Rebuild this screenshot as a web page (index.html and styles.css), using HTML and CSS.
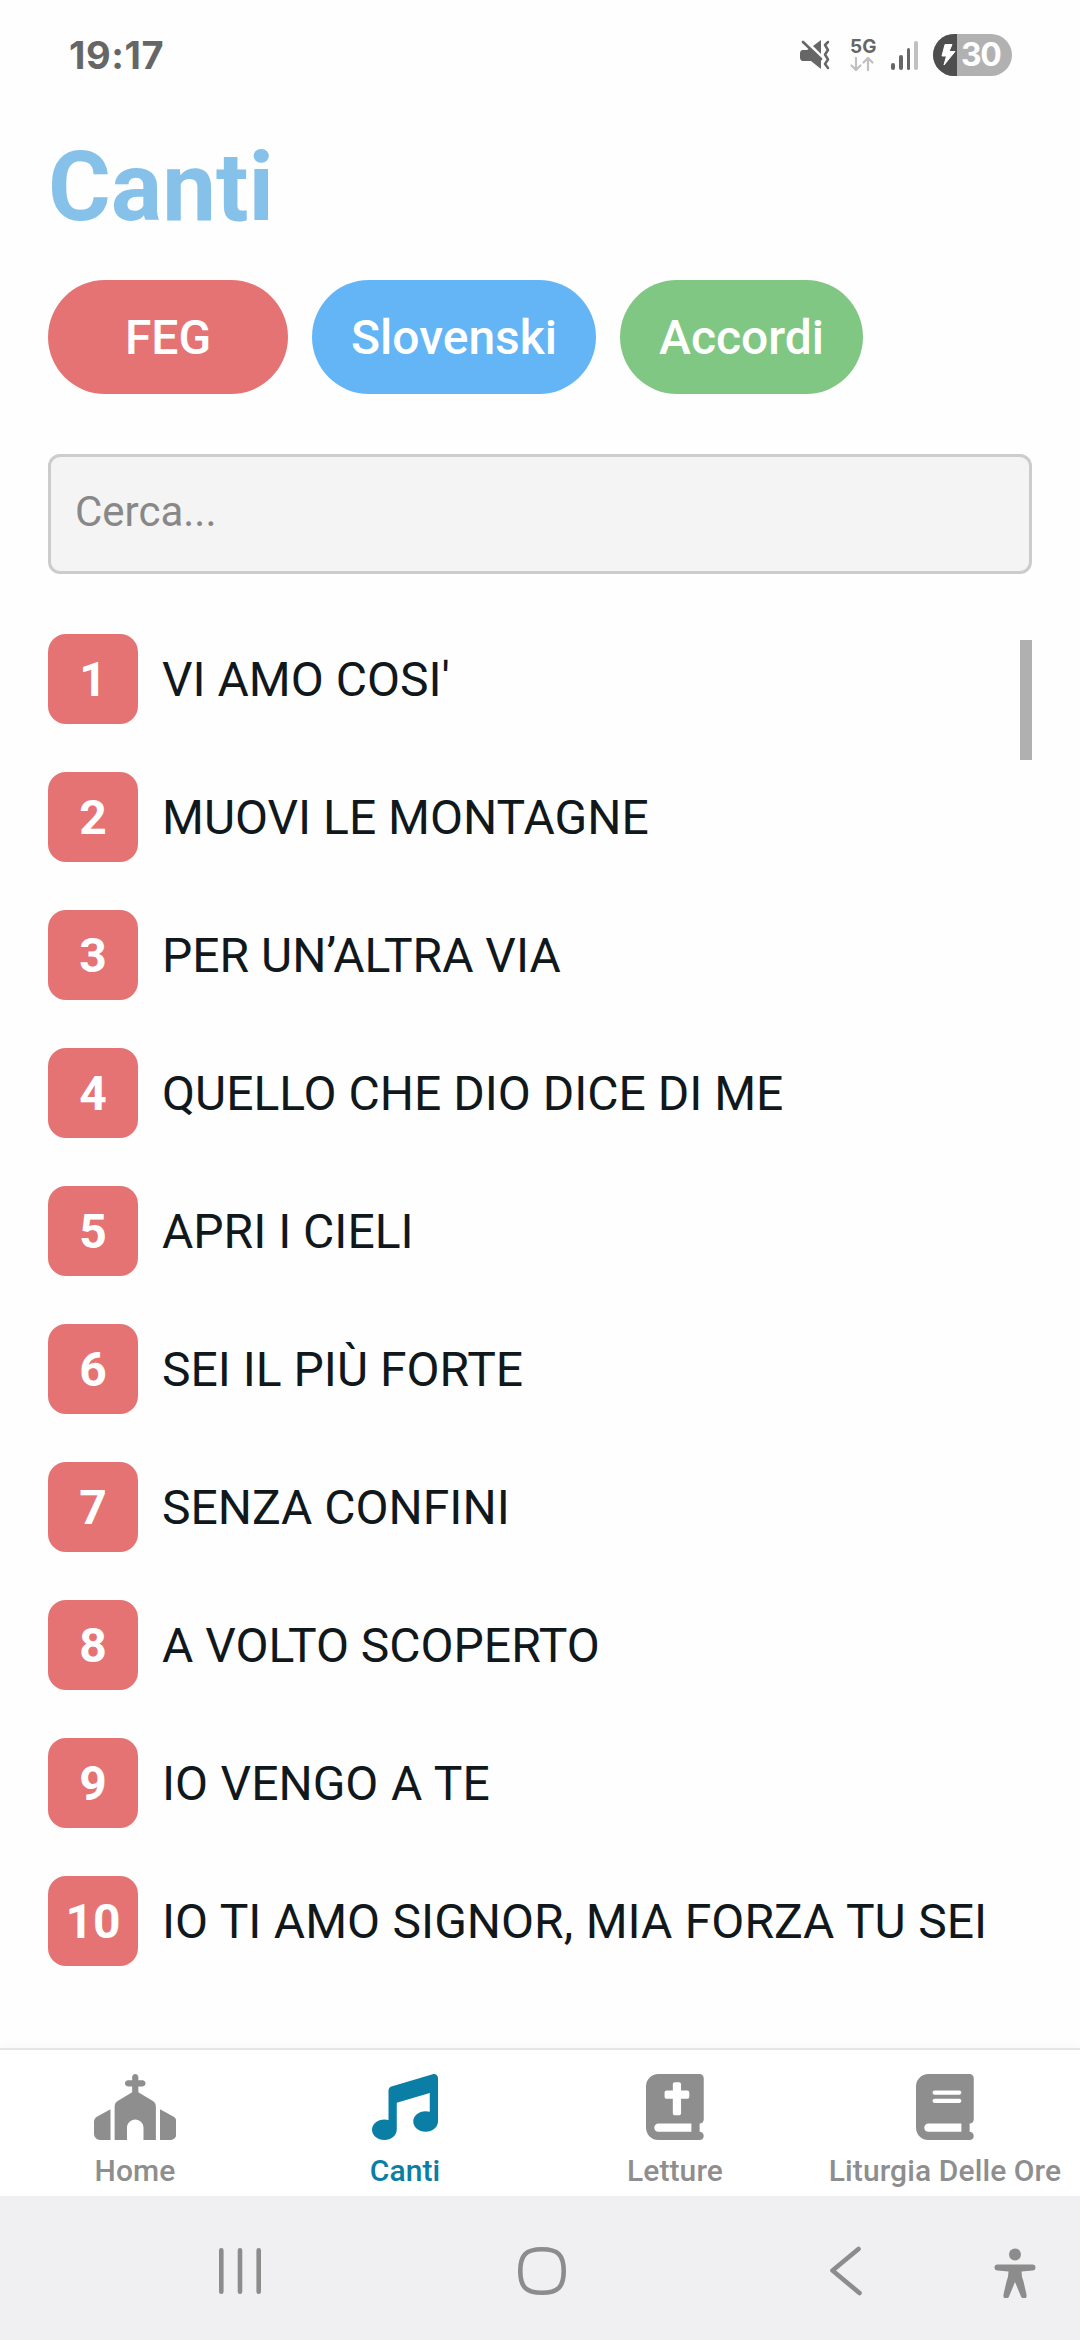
FILE: index.html
```html
<!DOCTYPE html>
<html lang="it">
  <head>
    <meta charset="UTF-8" />
    <meta name="viewport" content="width=device-width, initial-scale=1.0" />
    <title>Canti</title>

    <link rel="stylesheet" href="styles.css">
  </head>

  <body>
    <div class="status-bar">
      <span class="clock">19:17</span>
      <div class="status-icons">
        <svg class="mute" viewBox="0 0 30 30" width="30" height="30">
          <path d="M2 10h5l3-2 11 11v10l-10-8H2q-2-1-2-3v-5q0-2 2-3z" fill="#666" />
          <path d="M13 6l8-6v14z" fill="#666" />
          <path d="M3 2l18 17" stroke="#666" stroke-width="2.6" stroke-linecap="round" />
          <path d="M28 2l-3 3 3 5-3 4.500 3 5-3 4.500 3 4" fill="none" stroke="#666" stroke-width="2.500" stroke-linecap="round" stroke-linejoin="round" />
        </svg>
        <div class="network">
          <span>5G</span>
          <svg viewBox="0 0 24 14" width="24" height="14">
            <path d="M6 1v12M1.500 8.500L6 13l4.500-4.500M18 13V1M13.500 5.500L18 1l4.500 4.500" fill="none" stroke="#c0c0c0" stroke-width="2.200" stroke-linecap="round" stroke-linejoin="round" />
          </svg>
        </div>
        <div class="signal">
          <i class="s1"></i>
          <i class="s2"></i>
          <i class="s3"></i>
          <i class="s4"></i>
        </div>
        <div class="battery">
          <svg viewBox="0 0 24 42" width="24" height="42">
            <path d="M12 10.500h7l-3 7h6L11 31l2.500-9H9z" fill="#fff" stroke="#fff" stroke-linejoin="round" />
          </svg>
          <span>30</span>
        </div>
      </div>
    </div>

    <main>
      <h1>Canti</h1>

      <div class="filters">
        <button class="feg">FEG</button>
        <button class="slovenski">Slovenski</button>
        <button class="accordi">Accordi</button>
      </div>

      <input class="search" type="text" placeholder="Cerca..." />

      <div class="songs">
        <ul>
          <li><b>1</b><span>VI AMO COSI'</span></li>
          <li><b>2</b><span>MUOVI LE MONTAGNE</span></li>
          <li><b>3</b><span>PER UN’ALTRA VIA</span></li>
          <li><b>4</b><span>QUELLO CHE DIO DICE DI ME</span></li>
          <li><b>5</b><span>APRI I CIELI</span></li>
          <li><b>6</b><span>SEI IL PIÙ FORTE</span></li>
          <li><b>7</b><span>SENZA CONFINI</span></li>
          <li><b>8</b><span>A VOLTO SCOPERTO</span></li>
          <li><b>9</b><span>IO VENGO A TE</span></li>
          <li><b>10</b><span>IO TI AMO SIGNOR, MIA FORZA TU SEI</span></li>
        </ul>
        <div class="scroll-thumb"></div>
      </div>
    </main>

    <nav class="tabs">
      <a>
        <svg viewBox="0 0 640 512" height="66">
          <path d="M344 24c0-13.300-10.700-24-24-24s-24 10.700-24 24V48H264c-13.300 0-24 10.700-24 24s10.700 24 24 24h32v46.400L183.300 210c-14.500 8.700-23.300 24.300-23.300 41.200V512h96V416c0-35.300 28.700-64 64-64s64 28.700 64 64v96h96V251.200c0-16.900-8.800-32.500-23.300-41.200L344 142.400V96h32c13.300 0 24-10.700 24-24s-10.700-24-24-24H344V24zM24.900 330.300C9.500 338.800 0 354.900 0 372.400V464c0 26.500 21.500 48 48 48h80V273.600L24.900 330.300zM592 512c26.500 0 48-21.500 48-48V372.400c0-17.500-9.500-33.600-24.900-42.100L512 273.600V512h80z" />
        </svg>
        <span>Home</span>
      </a>
      <a class="active">
        <svg viewBox="0 0 512 512" height="66">
          <path d="M499.100 6.300c8.100 6 12.900 15.600 12.900 25.700v72V368c0 44.200-43 80-96 80s-96-35.800-96-80s43-80 96-80c11.200 0 22 1.600 32 4.600V147L192 223.800V432c0 44.200-43 80-96 80s-96-35.800-96-80s43-80 96-80c11.200 0 22 1.600 32 4.600V200 128c0-14.100 9.300-26.600 22.800-30.700l320-96c9.700-2.900 20.200-1.100 28.300 5z" />
        </svg>
        <span>Canti</span>
      </a>
      <a>
        <svg viewBox="0 0 448 512" height="66">
          <path fill-rule="evenodd" d="M96 0C43 0 0 43 0 96V416c0 53 43 96 96 96H384h32c17.700 0 32-14.300 32-32s-14.300-32-32-32V384c17.700 0 32-14.300 32-32V32c0-17.700-14.300-32-32-32H384 96zm0 384H352v64H96c-17.700 0-32-14.300-32-32s14.300-32 32-32zM208 80c0-8.800 7.200-16 16-16h32c8.800 0 16 7.200 16 16v48h48c8.800 0 16 7.200 16 16v32c0 8.800-7.200 16-16 16H272V304c0 8.800-7.200 16-16 16H224c-8.800 0-16-7.200-16-16V192H160c-8.800 0-16-7.200-16-16V144c0-8.800 7.200-16 16-16h48V80z" />
        </svg>
        <span>Letture</span>
      </a>
      <a>
        <svg viewBox="0 0 448 512" height="66">
          <path fill-rule="evenodd" d="M96 0C43 0 0 43 0 96V416c0 53 43 96 96 96H384h32c17.700 0 32-14.300 32-32s-14.300-32-32-32V384c17.700 0 32-14.300 32-32V32c0-17.700-14.300-32-32-32H384 96zm0 384H352v64H96c-17.700 0-32-14.300-32-32s14.300-32 32-32zm32-240c0-8.800 7.200-16 16-16H336c8.800 0 16 7.200 16 16s-7.200 16-16 16H144c-8.800 0-16-7.200-16-16zm16 48H336c8.800 0 16 7.200 16 16s-7.200 16-16 16H144c-8.800 0-16-7.200-16-16s7.200-16 16-16z" />
        </svg>
        <span>Liturgia Delle Ore</span>
      </a>
    </nav>

    <div class="system-nav">
      <svg viewBox="0 0 48 54" width="48" height="54">
        <path d="M5.300 6.300v41.500M24 6.300v41.500M42.700 6.300v41.500" />
      </svg>
      <svg viewBox="0 0 54 54" width="54" height="54">
        <path d="M27 5.300c-16 0-21.700 5.700-21.700 21.700S11 48.700 27 48.700 48.700 43 48.700 27 43 5.300 27 5.300z" />
      </svg>
      <svg viewBox="0 0 40 54" width="40" height="54">
        <path d="M32.500 5L6.500 26.500l27 22.500" />
      </svg>
      <svg class="person" viewBox="0 0 46 54" width="46" height="54">
        <circle cx="23" cy="10.500" r="6" />
        <path d="M5.500 20.500h35q3 0 3 3t-3 3l-11 1q0 5 2 10l3 13q.5 4-2 4t-3.500-2L23 38l-6 14.500q-1 2-3.500 2t-2-4l3-13q2-5 2-10l-11-1q-3 0-3-3t3-3z" />
      </svg>
    </div>
  </body>
</html>
```

FILE: styles.css
```css
html,
body {
  height: 100%;
  margin: 0;
  padding: 0;
}

body {
  display: flex;
  flex-flow: column;
  overflow: hidden;
  background: #fefefe;
  font-family: Roboto, sans-serif;
}

.status-bar {
  display: flex;
  justify-content: space-between;
  align-items: center;
  height: 110px;
  padding: 0 68px 0 69px;
}

.clock {
  color: #666;
  font: 700 38px Inter, sans-serif;
  letter-spacing: 0.6px;
}

.status-icons {
  display: flex;
  align-items: center;
}

.mute {
  margin-right: 20px;
}

.network {
  display: flex;
  flex-flow: column;
  gap: 3px;
  width: 24px;
  margin-right: 17px;
  color: #666;
  font: 700 19px/15px Inter, sans-serif;
}

.signal {
  display: flex;
  align-items: flex-end;
  gap: 4px;
  margin-right: 15px;
}

.signal i {
  width: 3.75px;
  border-radius: 2px;
  background: #666;
}

.signal .s1 {
  height: 7px;
}

.signal .s2 {
  height: 15px;
}

.signal .s3 {
  height: 22px;
}

.signal .s4 {
  height: 29px;
  background: #c0c0c0;
}

.battery {
  display: flex;
  align-items: center;
  width: 79px;
  height: 42px;
  border-radius: 21px;
  overflow: hidden;
  background: #b1b1b1;
  color: #fff;
  font: 700 32px/42px Inter, sans-serif;
}

.battery svg {
  background: #4e4e4e;
}

.battery span {
  margin-left: 4px;
  letter-spacing: -1.5px;
}

main {
  flex-grow: 1;
  padding: 0 48px;
}

h1 {
  margin: 20px 0 36px;
  color: #85c1e9;
  font-size: 96px;
  line-height: 114px;
}

.filters {
  display: flex;
  gap: 24px;
}

.filters button {
  min-width: 240px;
  height: 114px;
  padding: 0 39px;
  border: none;
  border-radius: 60px;
  color: #fff;
  font: 500 48px Roboto, sans-serif;
}

.filters .feg {
  background: #e57373;
}

.filters .slovenski {
  background: #64b5f6;
}

.filters .accordi {
  background: #81c784;
}

.search {
  display: block;
  box-sizing: border-box;
  width: 100%;
  height: 120px;
  margin-top: 60px;
  padding: 0 24px 5px;
  border: 3px solid #ccc;
  border-radius: 12px;
  background: #f4f4f4;
  font: 42px Roboto, sans-serif;
}

.search::placeholder {
  color: #888;
}

.songs {
  position: relative;
  margin-top: 60px;
}

.songs ul {
  display: flex;
  flex-flow: column;
  gap: 48px;
  margin: 0;
  padding: 0;
  list-style: none;
}

.songs li {
  display: flex;
  align-items: center;
  gap: 24px;
  color: #11181c;
  font-size: 48px;
  white-space: nowrap;
}

.songs li:nth-child(n + 9) {
  word-spacing: 0.6px;
}

.songs b {
  box-sizing: border-box;
  width: 90px;
  height: 90px;
  padding-top: 1px;
  border-radius: 18px;
  background: #e57373;
  color: #fff;
  line-height: 90px;
  text-align: center;
}

.scroll-thumb {
  position: absolute;
  top: 6px;
  right: 0;
  width: 12px;
  height: 120px;
  background: #b0b0b0;
}

.tabs {
  display: flex;
  box-sizing: border-box;
  height: 148px;
  padding-top: 24px;
  border-top: 2px solid #e6e6e6;
  background: #fff;
  box-shadow: 0 0 12px rgba(0, 0, 0, 0.04);
}

.tabs a {
  display: flex;
  flex-flow: column;
  align-items: center;
  gap: 13px;
  width: 270px;
  color: #8e8e8f;
  font-size: 30px;
  font-weight: 500;
  letter-spacing: 0.1px;
  white-space: nowrap;
}

.tabs svg {
  fill: currentColor;
}

.tabs .active {
  color: #0a7ea4;
}

.system-nav {
  display: flex;
  align-items: flex-start;
  box-sizing: border-box;
  height: 144px;
  padding: 48px 0 0 216px;
  background: #f0f0f3;
}

.system-nav svg {
  fill: none;
  stroke: #8c8c8c;
  stroke-width: 4.6;
  stroke-linecap: round;
  stroke-linejoin: round;
}

.system-nav svg:nth-child(2) {
  margin-left: 251px;
}

.system-nav svg:nth-child(3) {
  margin-left: 257px;
}

.system-nav .person {
  margin-left: 126px;
  fill: #8c8c8c;
  stroke: none;
}
```
